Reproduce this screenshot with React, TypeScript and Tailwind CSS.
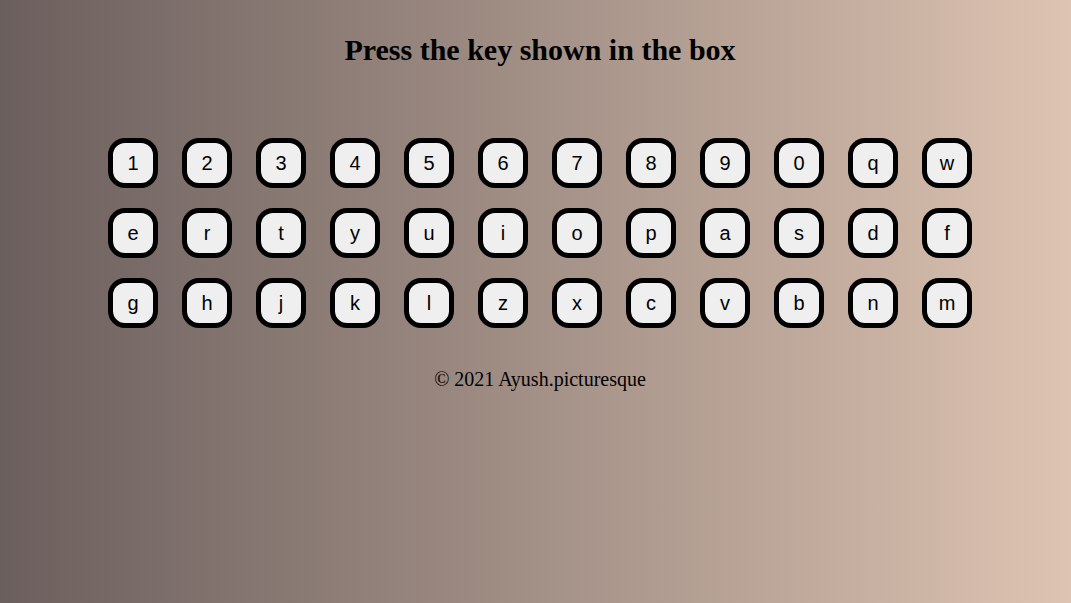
const rows = [
  ["1", "2", "3", "4", "5", "6", "7", "8", "9", "0", "q", "w"],
  ["e", "r", "t", "y", "u", "i", "o", "p", "a", "s", "d", "f"],
  ["g", "h", "j", "k", "l", "z", "x", "c", "v", "b", "n", "m"],
];

const Key = ({ label }: { label: string }) => (
  <div className="flex h-[50px] w-[50px] items-center justify-center rounded-[17px] border-[5px] border-black bg-[#efefef] font-['Liberation_Sans',Arial,sans-serif] text-[20px] text-black">
    {label}
  </div>
);

export default function App() {
  return (
    <div className="flex h-[603px] w-full flex-col items-center bg-gradient-to-r from-[#6b5f5d] to-[#dec4b2] pl-[9px] font-['Liberation_Serif','Times_New_Roman',serif] text-black">
      <h1 className="mt-[31px] text-[30px] font-bold leading-[38px]">Press the key shown in the box</h1>
      <div className="mt-[69px] flex flex-col gap-[20px]">
        {rows.map((row, i) => (
          <div key={i} className="flex gap-[24px]">
            {row.map((k) => (
              <Key key={k} label={k} />
            ))}
          </div>
        ))}
      </div>
      <p className="mt-[39px] text-[20px] leading-[24px]">© 2021 Ayush.picturesque</p>
    </div>
  );
}
